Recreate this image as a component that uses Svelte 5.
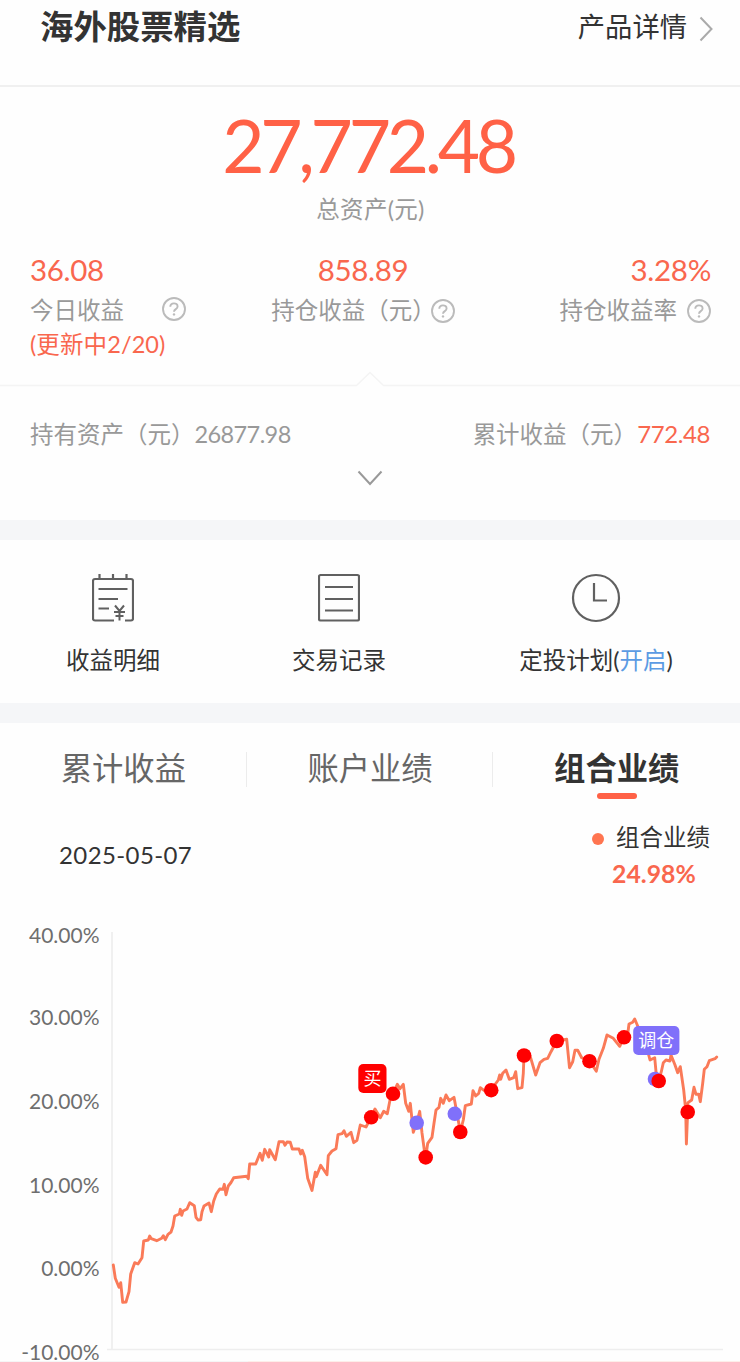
<script lang="ts">
  type Marker = { x: number; y: number; kind: 'buy' | 'adjust' };

  const stats = [
    { value: '36.08', label: '今日收益', note: '(更新中2/20)', cls: 'today' },
    { value: '858.89', label: '持仓收益（元）', note: '', cls: 'holding' },
    { value: '3.28%', label: '持仓收益率', note: '', cls: 'rate' },
  ];

  const tabs = ['累计收益', '账户业绩', '组合业绩'];
  let activeTab = $state(2);

  const ticks = [
    { label: '40.00%', y: 936 },
    { label: '30.00%', y: 1018 },
    { label: '20.00%', y: 1102 },
    { label: '10.00%', y: 1185.5 },
    { label: '0.00%', y: 1269 },
    { label: '-10.00%', y: 1352.5 },
  ];

  const line = `113.3,1265 115.3,1278.3 119,1287.3 120.7,1282.7 122.7,1302.3 126,1302 129,1291.7 130.7,1274
    134.7,1262.7 138,1264 142,1257.7 143.7,1241 148.3,1240 149.7,1236 151.3,1238.7 156.7,1240.7 161.7,1238.3
    163.3,1235.7 165.3,1239.7 168,1234.3 171,1232 173,1226 174.7,1216 179.3,1214 180.3,1209.3 181.7,1215.3
    183,1211 187,1209 189.7,1202.7 194.3,1205.7 196,1217.3 198,1220 200.7,1219.7 202,1211.7 204,1206 209,1203
    211.3,1211.7 213.7,1201 216.3,1194 219.7,1189 223,1189.3 224.3,1184.3 226,1194.7 228.3,1186 231,1182.5
    233.7,1177.7 246.7,1176.3 248.3,1178.7 249.7,1164 255.7,1164 260,1153.3 262.3,1160.3 264.7,1149.3
    268.7,1157 269.7,1149.7 275.3,1159.7 279,1141.7 283.3,1141.7 285,1145.3 287,1142 290.3,1142.3 292.3,1149
    299,1149 300.7,1154 302.3,1150.3 304.7,1156.7 307.7,1178.3 312,1190.5 315.3,1172.3 316.3,1176.7
    320.7,1165.3 327,1174.7 328.3,1155.7 332,1151 336,1148.7 338,1134.7 342,1133.7 344,1130.7 346.3,1136.3
    351,1132.3 353.7,1142.7 357,1140.3 360.3,1125 366,1127 371,1117.3 375,1109 380.3,1117.7 383.7,1111.3
    387.3,1113.7 390,1100 393,1094 397.3,1084.3 400,1088.7 403.3,1084.3 405.7,1103.3 408.7,1111.3
    410.3,1103.3 413.3,1132.3 416.7,1123 419.7,1111.3 422,1133 424.3,1150 425.7,1157.3 427.7,1143.3
    432,1137.3 434,1123.3 436,1110 439,1107.3 440.7,1098.3 443.3,1103.3 446,1095 449.3,1100.7 454,1097.3
    456.7,1111.7 460.3,1131.7 463.3,1120 465.3,1105.7 471.3,1104 473,1090.7 475.7,1096 478.7,1093.3
    480.3,1087.7 484.3,1090.7 491,1090 498.3,1080 499.7,1075 500.7,1079.3 502.7,1073.3 506,1070 509.3,1079.3
    513.7,1077.7 515.7,1071.7 517.7,1088.7 522,1087.7 523.3,1073.3 524,1055.7 530,1055.7 535.7,1075
    540,1062.7 544,1059.3 547.7,1058.3 551,1051.7 556.7,1041 566.7,1039.3 569.5,1067.7 572.7,1061.7
    575,1050.3 577.7,1050.3 581.7,1057.7 589.7,1061.3 596.3,1071.3 599,1059.3 603.3,1048.3 607,1035
    613.3,1038.3 619.7,1046.3 623.7,1037.3 628,1031.7 629,1024 632.7,1022.3 634.7,1019 638,1026.7 644,1045
    648.7,1055 650,1060 654.7,1057.7 656,1071.7 658.7,1081 661.3,1071.7 663.3,1062.7 666,1060 670,1061
    671,1055 675,1065 677.7,1072.7 680.3,1066.7 683.7,1090 685.7,1110 686.4,1144 688,1102.7 691.7,1100
    694,1087.3 696,1094.3 698.7,1094.3 700.3,1101.7 702.7,1083.3 704.3,1069.3 707,1066.7 709.3,1060.7
    715,1058.7 716.7,1057`;

  const markers: Marker[] = [
    { x: 371.2, y: 1117.3, kind: 'buy' },
    { x: 393, y: 1093.8, kind: 'buy' },
    { x: 416.7, y: 1122.8, kind: 'adjust' },
    { x: 425.7, y: 1157.4, kind: 'buy' },
    { x: 454.8, y: 1113.8, kind: 'adjust' },
    { x: 460.3, y: 1132, kind: 'buy' },
    { x: 491.2, y: 1090.2, kind: 'buy' },
    { x: 524, y: 1055.5, kind: 'buy' },
    { x: 556.8, y: 1041, kind: 'buy' },
    { x: 589.5, y: 1061.2, kind: 'buy' },
    { x: 624, y: 1037.3, kind: 'buy' },
    { x: 655, y: 1079, kind: 'adjust' },
    { x: 658.7, y: 1081, kind: 'buy' },
    { x: 687.7, y: 1112, kind: 'buy' },
  ];
</script>

<main>
  <header>
    <h1>海外股票精选</h1>
    <a class="detail" href="#detail">
      <span>产品详情</span>
      <svg width="14" height="26" viewBox="0 0 14 26"><path d="M1.5 1.5 L12.5 13 L1.5 24.5" /></svg>
    </a>
  </header>

  <section class="summary">
    <div class="total">27,772.48</div>
    <div class="caption">总资产(元)</div>
    <div class="stats">
      {#each stats as stat}
        <div class="stat {stat.cls}">
          <div class="value">{stat.value}</div>
          <div class="label">
            <span>{stat.label}</span>
            <svg class="help" width="24" height="24" viewBox="0 0 24 24">
              <circle cx="12" cy="12" r="11" />
              <path d="M8.3 9.8 C8.3 5.3 15.6 5.2 15.6 9.5 C15.6 12.2 12 12 12 14.7" />
              <circle class="dot" cx="12" cy="17.4" r="1.2" />
            </svg>
          </div>
          {#if stat.note}
            <div class="note">{stat.note}</div>
          {/if}
        </div>
      {/each}
    </div>
  </section>

  <svg class="notch" width="740" height="16" viewBox="0 0 740 16">
    <path d="M0 14.5 H356.5 L370 1.5 L383.5 14.5 H740" />
  </svg>

  <section class="assets">
    <div class="row">
      <span>持有资产（元）<span class="held">26877.98</span></span>
      <span>累计收益（元）<b>772.48</b></span>
    </div>
    <svg class="expand" width="26" height="17" viewBox="0 0 26 17"><path d="M1.5 1.5 L13 14 L24.5 1.5" /></svg>
  </section>

  <nav class="actions">
    <div class="action">
      <svg width="42" height="50" viewBox="0 0 42 50">
        <path d="M22 47.5 H3 Q1 47.5 1 45.5 V8 Q1 6 3 6 H39 Q41 6 41 8 V45.5 Q41 47.5 39 47.5 H33" />
        <path d="M7.5 1 V6 M21 1 V6 M34.5 1 V6 M6.5 16 H35.5 M6.5 26 H26 M6.5 35.5 H17" />
        <path class="yen" d="M23 32.5 L27.5 38 L32 32.5 M27.5 38 V47.5 M22 39 H33 M23.5 43 H31.5" />
      </svg>
      <span>收益明细</span>
    </div>
    <div class="action">
      <svg width="42" height="50" viewBox="0 0 42 50">
        <rect x="1" y="2" width="40" height="45.5" rx="1.5" />
        <path d="M7 14 H35 M7 26 H35 M7 37.5 H35" />
      </svg>
      <span>交易记录</span>
    </div>
    <div class="action">
      <svg width="50" height="50" viewBox="0 0 50 50">
        <circle cx="25" cy="25" r="23" />
        <path d="M23 10 V27.5 H36" />
      </svg>
      <span>定投计划(<em>开启</em>)</span>
    </div>
  </nav>

  <section class="performance">
    <div class="tabs">
      {#each tabs as tab, i}
        <button class:active={activeTab === i} onclick={() => (activeTab = i)}>{tab}</button>
      {/each}
    </div>
    <div class="info">
      <time>2025-05-07</time>
      <div class="legend">
        <div class="series"><i></i>组合业绩</div>
        <strong>24.98%</strong>
      </div>
    </div>
    <svg class="chart" width="740" height="452" viewBox="0 910 740 452">
      <path class="axis" d="M112 932 V1349.5 M107 1349.5 H723" />
      {#each ticks as tick}
        <text class="tick" x="99.5" y={tick.y + 7.3}>{tick.label}</text>
      {/each}
      <polyline points={line} />
      {#each markers as m}
        <circle class={m.kind} cx={m.x} cy={m.y} r="7.3" />
      {/each}
      <rect class="buy" x="358.3" y="1064" width="28.2" height="29" rx="5" />
      <text class="tag" x="372.4" y="1085">买</text>
      <rect class="adjust" x="633.2" y="1026" width="46.2" height="29" rx="5" />
      <text class="tag" x="656.3" y="1047">调仓</text>
      <rect class="edge" x="0" y="1361" width="248" height="1" />
      <rect class="edge warm" x="248" y="1361" width="492" height="1" />
    </svg>
  </section>
</main>

<style>
  :global(body) {
    background: #fefefe;
  }
  main {
    width: 740px;
    height: 1362px;
    overflow: hidden;
    background: #fefefe;
    color: #333;
    font-family: Lato, "Noto Sans CJK SC", sans-serif;
    font-size: 23.5px;
  }
  svg {
    display: block;
    fill: none;
  }
  header {
    display: flex;
    justify-content: space-between;
    box-sizing: border-box;
    height: 87px;
    padding: 0 27px 0 40px;
    border-bottom: 2px solid #f0f0f0;
  }
  h1 {
    margin: 0;
    font-size: 33.4px;
    line-height: 53px;
    font-weight: 700;
  }
  .detail {
    display: flex;
    align-items: flex-start;
    gap: 12px;
    color: #333;
    font-size: 27.3px;
    line-height: 54px;
    text-decoration: none;
  }
  .detail svg {
    stroke: #aaa;
    stroke-width: 2;
    margin-top: 16px;
  }
  .summary {
    height: 284px;
    box-sizing: border-box;
    padding: 18px 29px 0 30px;
    text-align: center;
  }
  .total {
    padding-right: 5px;
    color: #ff6146;
    font-size: 73px;
    line-height: 80px;
    letter-spacing: -4.3px;
  }
  .caption {
    margin-top: 9px;
    line-height: 30px;
    font-size: 23.5px;
    letter-spacing: 0.3px;
    color: #999;
  }
  .stats {
    display: flex;
    justify-content: space-between;
    margin-top: 26px;
  }
  .stat {
    display: flex;
    flex-direction: column;
    align-items: center;
  }
  .today {
    align-items: flex-start;
    width: 173px;
  }
  .rate {
    align-items: flex-end;
    width: 188px;
  }
  .value {
    color: #f9674e;
    font-size: 29.5px;
    line-height: 40px;
    letter-spacing: -0.3px;
  }
  .label {
    display: flex;
    align-items: center;
    gap: 10px;
    height: 40px;
    color: #999;
    white-space: nowrap;
  }
  .label span {
    line-height: 38px;
  }
  .help {
    margin-top: 2px;
    stroke: #bbb;
    stroke-width: 1.9;
  }
  .today .help {
    margin: -2px 0 0 28px;
  }
  .holding .help {
    margin-left: -15px;
  }
  .help .dot {
    fill: #bbb;
    stroke: none;
  }
  .note {
    color: #f9674e;
    line-height: 28px;
    letter-spacing: 0.1px;
  }
  .notch {
    stroke: #f4f4f4;
    stroke-width: 1.5;
  }
  .assets {
    height: 133px;
  }
  .row {
    display: flex;
    justify-content: space-between;
    padding: 27px 30px 0 30px;
    line-height: 40px;
    color: #999;
  }
  .held {
    letter-spacing: -0.6px;
  }
  .row b {
    color: #f9674e;
    font-weight: 400;
    font-size: 24px;
    letter-spacing: -0.4px;
  }
  .expand {
    margin: 16px auto 0;
    stroke: #999;
    stroke-width: 2;
  }
  .actions {
    display: grid;
    grid-template-columns: 226px 226px 1fr;
    height: 163px;
    border-top: 20px solid #f5f6f8;
    border-bottom: 20px solid #f5f6f8;
  }
  .action {
    display: flex;
    flex-direction: column;
    align-items: center;
    padding-top: 33px;
    line-height: 40px;
    white-space: nowrap;
  }
  .action svg {
    stroke: #606060;
    stroke-width: 2.2;
    margin-bottom: 17px;
  }
  .action .yen {
    stroke-width: 2;
  }
  em {
    color: #5b9be3;
    font-style: normal;
  }
  .tabs {
    display: flex;
    height: 92px;
  }
  button {
    position: relative;
    flex: 1;
    height: 92px;
    padding: 0 0 6px;
    border: 0;
    background: none;
    color: #666;
    font: inherit;
    font-size: 31.3px;
  }
  button:not(:last-child)::before {
    content: "";
    position: absolute;
    right: 0;
    top: 29px;
    width: 1px;
    height: 35px;
    background: #ececec;
  }
  button.active {
    color: #333;
    font-weight: 700;
  }
  button.active::after {
    content: "";
    position: absolute;
    left: 50%;
    top: 70px;
    width: 40px;
    height: 6px;
    margin-left: -20px;
    border-radius: 3px;
    background: #ff6146;
  }
  .info {
    display: flex;
    justify-content: space-between;
    height: 95px;
    padding: 0 30px 0 59px;
  }
  time {
    line-height: 80px;
    font-size: 24px;
    letter-spacing: 0.4px;
  }
  .legend {
    display: flex;
    flex-direction: column;
    padding-top: 3px;
  }
  .series {
    display: flex;
    align-items: center;
    line-height: 38px;
  }
  i {
    width: 12px;
    height: 12px;
    margin: 4px 12px 0 0;
    border-radius: 50%;
    background: #ff7550;
  }
  strong {
    margin: -1px 0 0 20px;
    line-height: 38px;
    color: #f9674e;
    font-size: 24.8px;
  }
  .axis {
    stroke: #eee;
    stroke-width: 1.7;
  }
  .tick {
    fill: #6e6e6e;
    font-size: 21px;
    text-anchor: end;
  }
  polyline {
    stroke: #fa7a58;
    stroke-width: 2.9;
    stroke-linejoin: round;
    stroke-linecap: round;
  }
  .buy {
    fill: #f00;
  }
  .adjust {
    fill: #8070fa;
  }
  .tag {
    fill: #fff;
    font-size: 18px;
    text-anchor: middle;
  }
  .edge {
    fill: #f5f5f5;
  }
  .warm {
    fill: #fdeee9;
  }
</style>
